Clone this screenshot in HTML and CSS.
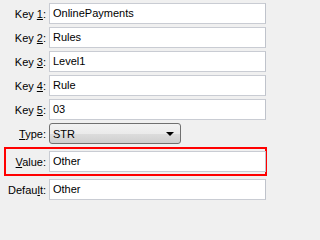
FILE: index.html
```html
<!DOCTYPE html>
<html>
<head>
<meta charset="utf-8">
<link rel="stylesheet" href="styles.css">
</head>
<body>
<form class="form">
  <div class="row"><label class="lbl">Key <u>1</u>:</label><div class="field">OnlinePayments</div></div>
  <div class="row"><label class="lbl">Key <u>2</u>:</label><div class="field">Rules</div></div>
  <div class="row"><label class="lbl">Key <u>3</u>:</label><div class="field">Level1</div></div>
  <div class="row"><label class="lbl">Key <u>4</u>:</label><div class="field">Rule</div></div>
  <div class="row"><label class="lbl">Key <u>5</u>:</label><div class="field">03</div></div>
  <div class="row row-type"><label class="lbl"><u>T</u>ype:</label>
    <div class="select"><span>STR</span>
      <svg class="arrow" width="8" height="4" viewBox="0 0 8 4"><path d="M0 0H8L4 4Z" fill="#000"/></svg>
    </div>
  </div>
  <div class="row row-value"><label class="lbl"><u>V</u>alue:</label><div class="field">Other</div></div>
  <div class="row"><label class="lbl">Defau<u>l</u>t:</label><div class="field">Other</div></div>
</form>
</body>
</html>
```
FILE: styles.css
```css
html, body {
  margin: 0;
  padding: 0;
  background: #f0f0f0;
  width: 271px;
  height: 201px;
  overflow: hidden;
}
.form {
  display: flex;
  flex-direction: column;
  gap: 3px;
  padding: 3px 5px 0 4px;
  font-family: "Liberation Sans", Arial, sans-serif;
  font-size: 11px;
  color: #000;
}
.row {
  display: grid;
  grid-template-columns: 45px 217px;
  align-items: center;
  height: 21px;
  padding-right: 0;
}
.lbl {
  text-align: right;
  padding-right: 3px;
  white-space: nowrap;
}
.lbl u {
  text-decoration-thickness: 1px;
  text-underline-offset: 1px;
}
.field {
  box-sizing: border-box;
  height: 21px;
  border: 1px solid #c9ccd3;
  border-right-color: #bfc3cb;
  background: #fff;
  padding: 0 3px;
  line-height: 19px;
  white-space: nowrap;
}
.row-type {
  margin-top: 0;
  grid-template-columns: 45px 132px;
}
.select {
  box-sizing: border-box;
  height: 21px;
  border: 1px solid #707070;
  border-radius: 3px;
  background: linear-gradient(#f2f2f2 0%, #ebebeb 50%, #dddddd 51%, #cfcfcf 100%);
  padding: 0 3px;
  display: flex;
  align-items: center;
  justify-content: space-between;
}
.arrow {
  margin-right: 3px;
}
.row-value {
  height: 25px;
  border: 2px solid #ff0000;
  padding: 0 1px 0 0;
  margin: 0 -1px 0 0;
  grid-template-columns: 43px 217px;
}
```
